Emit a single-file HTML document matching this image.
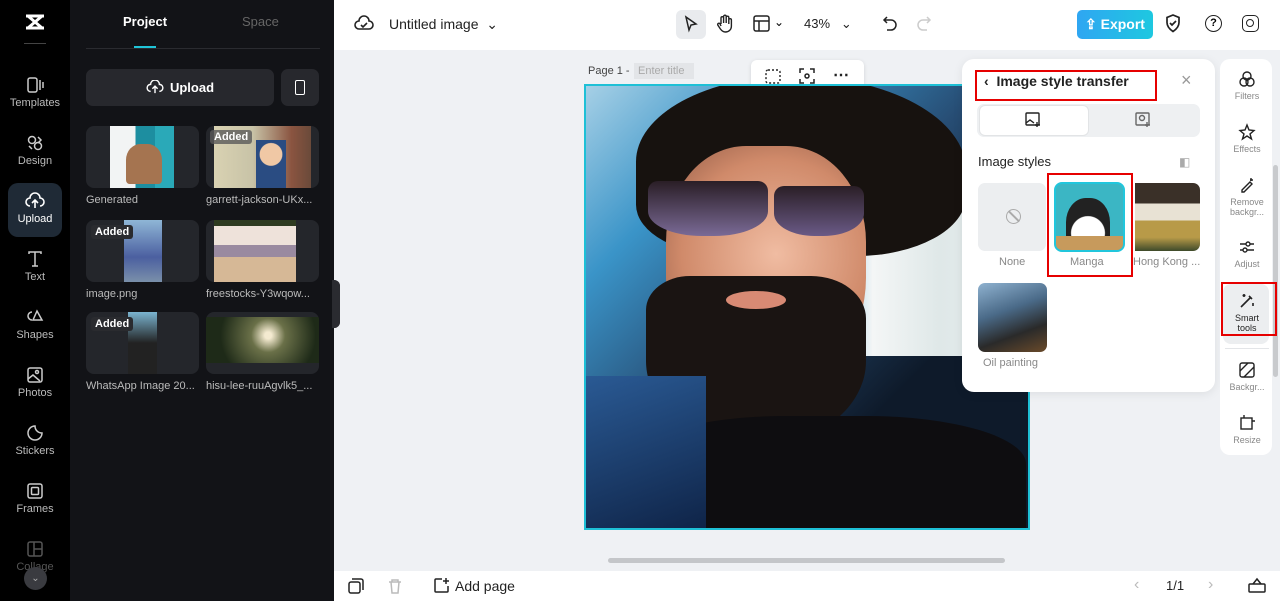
<!DOCTYPE html><html><head><meta charset="utf-8"><style>
*{box-sizing:border-box;margin:0;padding:0}
body{width:1280px;height:601px;overflow:hidden;font-family:"Liberation Sans",sans-serif;background:#eff1f4;position:relative}
.abs{position:absolute}
.side{left:0;top:0;width:70px;height:601px;background:#000}
.si{position:absolute;left:0;width:70px;text-align:center;color:#bbb;font-size:11px}
.si svg{display:block;margin:0 auto 3px}
.panel{left:70px;top:0;width:264px;height:601px;background:#121317}
.th{position:absolute;border-radius:8px;background:#24262b;overflow:hidden}
.cap{position:absolute;color:#bbb;font-size:11px}
.added{position:absolute;left:5px;top:5px;background:#2a2b2f;color:#fff;font-weight:bold;font-size:11px;padding:1px 4px;border-radius:3px}
.top{left:334px;top:0;width:946px;height:50px;background:#fff}
.bot{left:334px;top:571px;width:946px;height:30px;background:#fff}
.rt{position:absolute;left:1221px;width:52px;text-align:center;font-size:9px;color:#888;line-height:10px}
.rt svg{display:block;margin:0 auto 3px}
</style></head><body>
<div class="abs side">
 <svg class="abs" style="left:24px;top:13px" width="22" height="18" viewBox="0 0 22 18" fill="none" stroke="#fff" stroke-width="3"><path d="M2 3h18M2 15h18M4 3l14 12M18 3L4 15"/></svg>
 <div class="abs" style="left:24px;top:43px;width:22px;height:1px;background:#444"></div>
 <div class="si" style="top:76px"><svg width="18" height="18" viewBox="0 0 18 18" fill="none" stroke="#ccc" stroke-width="1.5"><rect x="2" y="2" width="9" height="14" rx="2"/><path d="M14 4v10M17 6v6"/></svg>Templates</div>
 <div class="si" style="top:134px"><svg width="18" height="18" viewBox="0 0 18 18" fill="none" stroke="#ccc" stroke-width="1.5"><circle cx="6" cy="6" r="3.5"/><circle cx="12" cy="12" r="3.5"/><path d="M12 3l3 3-3 3M3 12l3 3"/></svg>Design</div>
 <div class="abs" style="left:8px;top:183px;width:54px;height:54px;border-radius:10px;background:#1f2a36"></div>
 <div class="si" style="top:192px;color:#fff"><svg width="20" height="18" viewBox="0 0 20 18" fill="none" stroke="#fff" stroke-width="1.6"><path d="M5 14a4 4 0 010-8 5 5 0 0110 0 4 4 0 010 8M10 16V9M7 11l3-3 3 3"/></svg>Upload</div>
 <div class="si" style="top:250px"><svg width="18" height="18" viewBox="0 0 18 18" fill="none" stroke="#ccc" stroke-width="1.5"><path d="M3 4V2h12v2M9 2v14M6 16h6"/></svg>Text</div>
 <div class="si" style="top:308px"><svg width="18" height="18" viewBox="0 0 18 18" fill="none" stroke="#ccc" stroke-width="1.5"><path d="M6 4a4 4 0 100 8M11 3l5 9H7z"/></svg>Shapes</div>
 <div class="si" style="top:366px"><svg width="18" height="18" viewBox="0 0 18 18" fill="none" stroke="#ccc" stroke-width="1.5"><rect x="2" y="2" width="14" height="14" rx="2"/><path d="M2 13l5-4 7 6"/><circle cx="11" cy="6" r="1.5"/></svg>Photos</div>
 <div class="si" style="top:424px"><svg width="18" height="18" viewBox="0 0 18 18" fill="none" stroke="#ccc" stroke-width="1.5"><path d="M16 9A7 7 0 119 2c0 4 3 7 7 7z"/></svg>Stickers</div>
 <div class="si" style="top:482px"><svg width="18" height="18" viewBox="0 0 18 18" fill="none" stroke="#ccc" stroke-width="1.5"><rect x="2" y="2" width="14" height="14" rx="2"/><rect x="5.5" y="5.5" width="7" height="7" rx="1"/></svg>Frames</div>
 <div class="si" style="top:540px;color:#555"><svg width="18" height="18" viewBox="0 0 18 18" fill="none" stroke="#555" stroke-width="1.5"><rect x="2" y="2" width="14" height="14" rx="2"/><path d="M8 2v14M8 9h8"/></svg>Collage</div>
 <div class="abs" style="left:24px;top:567px;width:23px;height:23px;border-radius:50%;background:#3a3b40;color:#aaa;font-size:10px;text-align:center;line-height:23px">⌄</div>
</div>
<div class="abs panel">
 <div class="abs" style="left:53px;top:14px;color:#fff;font-weight:bold;font-size:13px">Project</div>
 <div class="abs" style="left:172px;top:14px;color:#666;font-size:13px">Space</div>
 <div class="abs" style="left:16px;top:48px;width:234px;height:1px;background:#2a2b30"></div>
 <div class="abs" style="left:64px;top:46px;width:22px;height:2px;background:#1fc4d8"></div>
 <div class="abs" style="left:16px;top:69px;width:188px;height:37px;border-radius:7px;background:#27282d;color:#fff;font-weight:bold;font-size:13px;text-align:center;line-height:37px"><svg width="18" height="14" viewBox="0 0 20 16" fill="none" stroke="#fff" stroke-width="1.6" style="vertical-align:-2px;margin-right:6px"><path d="M5 13a4 4 0 010-8 5 5 0 0110 0 4 4 0 010 8M10 15V8M7 10l3-3 3 3"/></svg>Upload</div>
 <div class="abs" style="left:211px;top:69px;width:38px;height:37px;border-radius:7px;background:#27282d"><div style="position:absolute;left:14px;top:11px;width:10px;height:15px;border:1.5px solid #fff;border-radius:2px"></div></div>
 <div class="th" style="left:16px;top:126px;width:113px;height:62px"><div style="position:absolute;left:24px;top:0;width:64px;height:62px;background:linear-gradient(90deg,#f2f4f4 0 40%,#1d8ea0 40% 70%,#2aa9b8 70%)"></div><div style="position:absolute;left:40px;top:18px;width:36px;height:40px;background:#a57450;border-radius:40% 40% 10% 10%"></div></div>
 <div class="cap" style="left:16px;top:194px">Generated</div>
 <div class="th" style="left:136px;top:126px;width:113px;height:62px"><div style="position:absolute;left:8px;top:0;width:97px;height:62px;background:linear-gradient(90deg,#d9d2b2,#c8c3a7 40%,#8a5440 80%,#6a4a3a)"></div><div style="position:absolute;left:50px;top:14px;width:30px;height:48px;background:radial-gradient(circle at 50% 30%,#f0c8a5 30%,#2a4c82 32%)"></div><span class="added" style="left:4px;top:4px;background:rgba(90,90,90,.8)">Added</span></div>
 <div class="cap" style="left:136px;top:194px">garrett-jackson-UKx...</div>
 <div class="th" style="left:16px;top:220px;width:113px;height:62px"><div style="position:absolute;left:38px;top:0;width:38px;height:62px;background:linear-gradient(180deg,#8fb6d6,#4b5fa0 60%,#7a90aa)"></div><span class="added">Added</span></div>
 <div class="cap" style="left:16px;top:288px">image.png</div>
 <div class="th" style="left:136px;top:220px;width:113px;height:62px"><div style="position:absolute;left:8px;top:0;width:82px;height:62px;background:linear-gradient(180deg,#2e3a20 0 10%,#eee2da 10% 40%,#9a8aa0 40% 60%,#d6b896 60%)"></div></div>
 <div class="cap" style="left:136px;top:288px">freestocks-Y3wqow...</div>
 <div class="th" style="left:16px;top:312px;width:113px;height:62px"><div style="position:absolute;left:42px;top:0;width:29px;height:62px;background:linear-gradient(180deg,#7ab4d0,#222 50%)"></div><span class="added">Added</span></div>
 <div class="cap" style="left:16px;top:380px">WhatsApp Image 20...</div>
 <div class="th" style="left:136px;top:312px;width:113px;height:62px"><div style="position:absolute;left:0;top:5px;width:113px;height:46px;background:radial-gradient(circle at 55% 40%,#f4ead0 5%,#6a7048 25%,#1e2a18 70%)"></div></div>
 <div class="cap" style="left:136px;top:380px">hisu-lee-ruuAgvlk5_...</div>
 <div class="abs" style="left:262px;top:280px;width:8px;height:48px;border-radius:0 6px 6px 0;background:#2a2b30"></div>
</div>
<div class="abs top">
 <svg class="abs" style="left:20px;top:15px" width="20" height="18" viewBox="0 0 20 18" fill="none" stroke="#222" stroke-width="1.6"><path d="M5 14a4 4 0 010-8 5 5 0 0110 0 4 4 0 010 8zM7 10l2 2 4-4"/></svg>
 <div class="abs" style="left:55px;top:16px;font-size:14px;color:#222">Untitled image &nbsp;⌄</div>
 <div class="abs" style="left:342px;top:10px;width:30px;height:29px;border-radius:6px;background:#e9ebee"></div>
 <svg class="abs" style="left:349px;top:15px" width="16" height="18" viewBox="0 0 16 18" fill="none" stroke="#222" stroke-width="1.5"><path d="M3 2l10 7-5 1-2 5z"/></svg>
 <svg class="abs" style="left:382px;top:14px" width="18" height="19" viewBox="0 0 18 19" fill="none" stroke="#222" stroke-width="1.4"><path d="M5 10V4a1.3 1.3 0 012.6 0v5M7.6 9V2.5a1.3 1.3 0 012.6 0V9M10.2 9V3.5a1.3 1.3 0 012.6 0V10M12.8 10V6a1.3 1.3 0 012.6 0v6c0 4-3 6-6 6-2 0-3.5-1-5-3l-2.6-4a1.3 1.3 0 012-1.5L5 12"/></svg>
 <svg class="abs" style="left:419px;top:15px" width="17" height="17" viewBox="0 0 17 17" fill="none" stroke="#222" stroke-width="1.5"><rect x="1" y="1" width="15" height="15" rx="2"/><path d="M1 6h15M6 6v10"/></svg>
 <div class="abs" style="left:440px;top:15px;font-size:12px">⌄</div>
 <div class="abs" style="left:470px;top:16px;font-size:13px;color:#222">43% &nbsp;&nbsp;⌄</div>
 <svg class="abs" style="left:548px;top:15px" width="16" height="16" viewBox="0 0 16 16" fill="none" stroke="#222" stroke-width="1.5"><path d="M5 2L2 5l3 3M2 5h7a5 5 0 010 10H5"/></svg>
 <svg class="abs" style="left:582px;top:15px" width="16" height="16" viewBox="0 0 16 16" fill="none" stroke="#ccc" stroke-width="1.5"><path d="M11 2l3 3-3 3M14 5H7a5 5 0 000 10h4"/></svg>
 <div class="abs" style="left:743px;top:10px;width:76px;height:29px;border-radius:5px;background:linear-gradient(90deg,#2fa6f2,#1ec8e0);color:#fff;font-weight:bold;font-size:14px;line-height:29px;text-align:center">⇪ Export</div>
 <svg class="abs" style="left:831px;top:14px" width="16" height="19" viewBox="0 0 16 19" fill="none" stroke="#222" stroke-width="1.7"><path d="M8 1l6 2.5v5c0 4-3 7-6 9-3-2-6-5-6-9v-5z"/><path d="M5 9l2 2 4-4"/></svg>
 <div class="abs" style="left:871px;top:15px;width:17px;height:17px;border:1.7px solid #222;border-radius:50%;font-size:11px;text-align:center;line-height:14px;font-weight:bold">?</div>
 <div class="abs" style="left:908px;top:15px;width:17px;height:17px;border:1.7px solid #222;border-radius:5px"><div style="margin:3px;width:8px;height:8px;border:1.7px solid #222;border-radius:50%"></div></div>
</div>
<div class="abs" style="left:588px;top:65px;font-size:11px;color:#444">Page 1 -</div>
<div class="abs" style="left:634px;top:63px;width:60px;height:16px;background:#e3e5e8;font-size:11px;color:#aaa;padding:2px 4px">Enter title</div>
<div class="abs" style="left:751px;top:60px;width:113px;height:32px;background:#fff;border-radius:6px;box-shadow:0 1px 4px rgba(0,0,0,.12)">
 <svg class="abs" style="left:14px;top:9px" width="16" height="15" viewBox="0 0 16 15" fill="none" stroke="#222" stroke-width="1.4" stroke-dasharray="2 2"><rect x="1" y="1" width="14" height="13" rx="2"/></svg>
 <svg class="abs" style="left:48px;top:8px" width="16" height="16" viewBox="0 0 16 16" fill="none" stroke="#222" stroke-width="1.5"><path d="M1 5V1h4M11 1h4v4M15 11v4h-4M5 15H1v-4"/><circle cx="8" cy="8" r="2"/></svg>
 <div class="abs" style="left:82px;top:5px;font-size:16px;font-weight:bold;color:#222">⋯</div>
</div>
<div class="abs" style="left:584px;top:84px;width:446px;height:446px;border:2px solid #1ec0d6;overflow:hidden;background:#1b2434">
 <div class="abs" style="left:0;top:0;width:442px;height:442px;background:linear-gradient(135deg,#a6d0e6 0%,#3a94c8 22%,#274d74 45%,#0e1a2a 70%)"></div>
 <div class="abs" style="left:220px;top:70px;width:222px;height:200px;background:linear-gradient(90deg,#41a0d0,#f4f6f6 30%,#dfe8e8 60%,#e8eef0)"></div>
 <div class="abs" style="left:50px;top:-10px;width:330px;height:180px;border-radius:50% 55% 35% 30%;background:#17120f"></div>
 <div class="abs" style="left:80px;top:60px;width:200px;height:240px;border-radius:40% 40% 45% 45%;background:radial-gradient(circle at 55% 45%,#f0bca2,#d08a6a 55%,#7a4a3a)"></div>
 <div class="abs" style="left:62px;top:95px;width:120px;height:55px;border-radius:10px 10px 45% 45%;background:linear-gradient(180deg,#2a1e26,#7a6a96)"></div>
 <div class="abs" style="left:188px;top:100px;width:90px;height:50px;border-radius:10px 10px 45% 45%;background:linear-gradient(180deg,#2a1e26,#6a5a86)"></div>
 <div class="abs" style="left:60px;top:190px;width:220px;height:170px;border-radius:20% 25% 50% 50%;background:#1a1412"></div>
 <div class="abs" style="left:140px;top:205px;width:60px;height:18px;border-radius:50%;background:#d88a74"></div>
 <div class="abs" style="left:40px;top:330px;width:400px;height:120px;background:#0e0d10;border-radius:40% 40% 0 0"></div>
 <div class="abs" style="left:0;top:290px;width:120px;height:152px;background:linear-gradient(160deg,#2a5a94,#0f2448)"></div>
</div>
<div class="abs" style="left:608px;top:558px;width:397px;height:5px;border-radius:3px;background:#c4c6c9"></div>
<div class="abs" style="left:333px;top:280px;width:7px;height:48px;border-radius:0 6px 6px 0;background:#2a2b30"></div>
<div class="abs" style="left:962px;top:59px;width:253px;height:333px;background:#fff;border-radius:12px;box-shadow:0 2px 10px rgba(0,0,0,.08)">
 <div class="abs" style="left:13px;top:11px;width:182px;height:31px;border:2px solid #e60000"></div>
 <div class="abs" style="left:22px;top:14px;font-size:14px;font-weight:bold;color:#222">‹&nbsp; Image style transfer</div>
 <div class="abs" style="left:219px;top:11px;font-size:18px;color:#999">×</div>
 <div class="abs" style="left:15px;top:45px;width:223px;height:33px;background:#eef0f2;border-radius:7px"></div>
 <div class="abs" style="left:17px;top:46px;width:110px;height:31px;background:#fff;border-radius:6px;border:1px solid #e2e4e6"></div>
 <svg class="abs" style="left:63px;top:53px" width="17" height="16" viewBox="0 0 17 16" fill="none" stroke="#222" stroke-width="1.4"><rect x="1" y="1" width="13" height="12" rx="1"/><path d="M1 11l4-3 4 3M12 10v5M10 13h5"/></svg>
 <svg class="abs" style="left:173px;top:53px" width="17" height="16" viewBox="0 0 17 16" fill="none" stroke="#666" stroke-width="1.4"><rect x="1" y="1" width="13" height="12" rx="1"/><circle cx="7" cy="6" r="2.5"/><path d="M12 10v5M10 13h5"/></svg>
 <div class="abs" style="left:16px;top:95px;font-size:13px;color:#222">Image styles</div>
 <div class="abs" style="left:217px;top:96px;font-size:12px;color:#aaa">◧</div>
 <div class="abs" style="left:16px;top:124px;width:68px;height:68px;border-radius:7px;background:#eceef0"></div>
 <div class="abs" style="left:44px;top:150px;width:15px;height:15px;border:1.5px solid #aaa;border-radius:50%"><div style="position:absolute;left:6px;top:-1px;width:1.5px;height:15px;background:#aaa;transform:rotate(-45deg)"></div></div>
 <div class="abs" style="left:37px;top:197px;font-size:11px;color:#888">None</div>
 <div class="abs" style="left:85px;top:114px;width:86px;height:104px;border:2px solid #e60000"></div>
 <div class="abs" style="left:92px;top:123px;width:71px;height:70px;border-radius:8px;border:2px solid #21c6dc;overflow:hidden;background:#3bb6c4"><div style="position:absolute;left:10px;top:14px;width:44px;height:54px;border-radius:45% 45% 20% 20%;background:radial-gradient(circle at 50% 65%,#fff 40%,#222 42%)"></div><div style="position:absolute;left:0;top:52px;width:71px;height:18px;background:#c79a5c"></div></div>
 <div class="abs" style="left:108px;top:197px;font-size:11px;color:#888">Manga</div>
 <div class="abs" style="left:173px;top:124px;width:65px;height:68px;border-radius:0 7px 7px 0;background:linear-gradient(180deg,#3a3028 0 30%,#e8e2d4 30% 55%,#b89a48 55% 80%,#3e4a2a)"></div>
 <div class="abs" style="left:171px;top:197px;font-size:11px;color:#888">Hong Kong ...</div>
 <div class="abs" style="left:16px;top:224px;width:69px;height:69px;border-radius:7px;background:linear-gradient(160deg,#8fb2d0,#4a6a88 40%,#2a2a2a 70%,#6a4a2a)"></div>
 <div class="abs" style="left:21px;top:298px;font-size:11px;color:#888">Oil painting</div>
</div>
<div class="abs" style="left:1220px;top:59px;width:52px;height:396px;background:#fff;border-radius:10px"></div>
<div class="abs" style="left:1273px;top:165px;width:5px;height:212px;border-radius:3px;background:#c8cacd"></div>
<div class="rt" style="top:70px"><svg width="18" height="18" viewBox="0 0 18 18" fill="none" stroke="#222" stroke-width="1.4"><circle cx="9" cy="6" r="4"/><circle cx="6" cy="12" r="4"/><circle cx="12" cy="12" r="4"/></svg>Filters</div>
<div class="rt" style="top:123px"><svg width="18" height="18" viewBox="0 0 18 18" fill="none" stroke="#222" stroke-width="1.4"><path d="M9 2l2 5 5 .5-4 3.5 1.5 5L9 13l-4.5 3L6 11 2 7.5 7 7z"/></svg>Effects</div>
<div class="rt" style="top:176px"><svg width="18" height="18" viewBox="0 0 18 18" fill="none" stroke="#222" stroke-width="1.4"><path d="M4 14l8-8 2 2-8 8H4zM13 2v3M15 4h-3"/></svg>Remove<br>backgr...</div>
<div class="rt" style="top:238px"><svg width="18" height="18" viewBox="0 0 18 18" fill="none" stroke="#222" stroke-width="1.4"><path d="M2 6h14M2 12h14"/><circle cx="10" cy="6" r="2" fill="#fff"/><circle cx="7" cy="12" r="2" fill="#fff"/></svg>Adjust</div>
<div class="abs" style="left:1223px;top:284px;width:46px;height:60px;border-radius:8px;background:#eceef0"></div>
<div class="abs" style="left:1221px;top:282px;width:56px;height:54px;border:2px solid #e60000"></div>
<div class="rt" style="top:292px;color:#222"><svg width="18" height="18" viewBox="0 0 18 18" fill="none" stroke="#222" stroke-width="1.6"><path d="M3 15l9-9M11 4l3 3M6 2v3M15 11v3M4.5 3.5h3"/></svg>Smart<br>tools</div>
<div class="abs" style="left:1225px;top:348px;width:44px;height:1px;background:#e3e5e8"></div>
<div class="rt" style="top:361px"><svg width="18" height="18" viewBox="0 0 18 18" fill="none" stroke="#222" stroke-width="1.4"><rect x="2" y="2" width="14" height="14" rx="2"/><path d="M2 10l8-8M6 16L16 6"/></svg>Backgr...</div>
<div class="rt" style="top:414px"><svg width="18" height="18" viewBox="0 0 18 18" fill="none" stroke="#222" stroke-width="1.4"><rect x="3" y="4" width="11" height="11"/><path d="M6 1v3M14 7h3"/></svg>Resize</div>
<div class="abs bot">
 <svg class="abs" style="left:14px;top:7px" width="16" height="16" viewBox="0 0 16 16" fill="none" stroke="#222" stroke-width="1.5"><rect x="1" y="4" width="11" height="11" rx="2"/><path d="M4 1h9a2 2 0 012 2v9"/></svg>
 <svg class="abs" style="left:53px;top:7px" width="16" height="16" viewBox="0 0 16 16" fill="none" stroke="#bbb" stroke-width="1.5"><path d="M2 4h12M5 4V2h6v2M4 4l1 11h6l1-11"/></svg>
 <svg class="abs" style="left:99px;top:6px" width="17" height="17" viewBox="0 0 17 17" fill="none" stroke="#222" stroke-width="1.5"><path d="M9 2H3a1 1 0 00-1 1v11a1 1 0 001 1h11a1 1 0 001-1V9M13 1v6M10 4h6"/></svg>
 <div class="abs" style="left:121px;top:7px;font-size:14px;color:#222">Add page</div>
 <div class="abs" style="left:800px;top:5px;font-size:16px;color:#bbb">‹</div>
 <div class="abs" style="left:832px;top:7px;font-size:13px;color:#222">1/1</div>
 <div class="abs" style="left:874px;top:5px;font-size:16px;color:#bbb">›</div>
 <svg class="abs" style="left:914px;top:6px" width="18" height="16" viewBox="0 0 18 16" fill="none" stroke="#222" stroke-width="1.5"><rect x="1" y="7" width="16" height="8" rx="1"/><path d="M5 7l4-5 4 5"/></svg>
</div>
</body></html>
